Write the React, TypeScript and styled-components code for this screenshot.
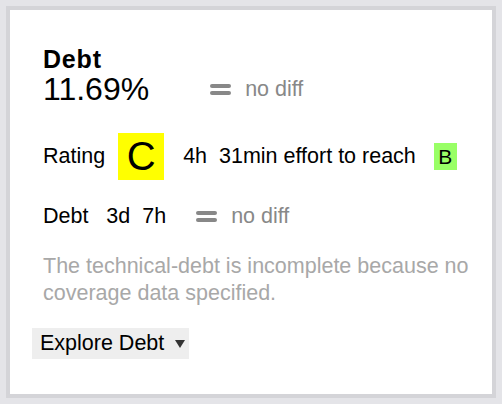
import React from "react";
import styled, { createGlobalStyle } from "styled-components";

const Global = createGlobalStyle`
  html, body { margin: 0; padding: 0; background: #e4e4e8; }
  body { font-family: "Liberation Sans", Arial, sans-serif; }
`;

const Frame = styled.div`
  width: 502px;
  height: 404px;
  box-sizing: border-box;
  padding: 6px;
  background: #e4e4e8;
`;

const Card = styled.div`
  box-sizing: border-box;
  height: 100%;
  border: 4px solid #d4d4d8;
  background: #ffffff;
  padding: 36px 20px 0 33px;
  display: flex;
  flex-direction: column;
`;

const Title = styled.div`
  font-size: 25px;
  font-weight: bold;
  letter-spacing: 0.8px;
  color: #000;
  line-height: 26px;
`;

const Row = styled.div<{ $mt?: number }>`
  display: flex;
  align-items: center;
  margin-top: ${(p) => p.$mt ?? 0}px;
  font-size: 21.5px;
  line-height: 25px;
  color: #000;
`;

const Big = styled.span`
  font-size: 32px;
  line-height: 34px;
`;

const EqIcon = styled.span<{ $ml: number }>`
  display: inline-flex;
  flex-direction: column;
  gap: 3px;
  margin-left: ${(p) => p.$ml}px;
  margin-right: 14px;
  &::before, &::after {
    content: "";
    display: block;
    width: 21px;
    height: 4px;
    border-radius: 2px;
    background: #888;
  }
`;

const Diff = styled.span`
  color: #888;
`;

const Badge = styled.span<{ $bg: string; $w: number; $h: number; $fs: number }>`
  display: inline-flex;
  align-items: center;
  justify-content: center;
  width: ${(p) => p.$w}px;
  height: ${(p) => p.$h}px;
  background: ${(p) => p.$bg};
  font-size: ${(p) => p.$fs}px;
  color: #000;
`;

const Gap = styled.span<{ $w: number }>`
  display: inline-block;
  width: ${(p) => p.$w}px;
`;

const Note = styled.p`
  margin: 24px 0 0;
  font-size: 21.5px;
  line-height: 27px;
  color: #a8a8a8;
`;

const ExploreButton = styled.button`
  align-self: flex-start;
  margin: 21px 0 0 -11px;
  height: 31px;
  padding: 0 4px 0 8px;
  border: none;
  background: #eeeeee;
  font-family: inherit;
  font-size: 21.5px;
  color: #000;
  display: inline-flex;
  align-items: center;
  gap: 11px;
  cursor: pointer;
`;

const Caret = styled.span`
  width: 0;
  height: 0;
  border-left: 5px solid transparent;
  border-right: 5px solid transparent;
  border-top: 8px solid #333;
`;

export default function App() {
  return (
    <>
      <Global />
      <Frame>
        <Card>
          <Title>Debt</Title>
          <Row>
            <Big>11.69%</Big>
            <EqIcon $ml={61} />
            <Diff>no diff</Diff>
          </Row>
          <Row $mt={27}>
            <span>Rating</span>
            <Gap $w={13} />
            <Badge $bg="#ffff00" $w={46} $h={47} $fs={40}>C</Badge>
            <Gap $w={19} />
            <span>4h&nbsp;&nbsp;31min effort to reach</span>
            <Gap $w={18} />
            <Badge $bg="#99ff66" $w={23} $h={27} $fs={21}>B</Badge>
          </Row>
          <Row $mt={24}>
            <span>Debt&nbsp;&nbsp;&nbsp;3d&nbsp;&nbsp;7h</span>
            <EqIcon $ml={30} />
            <Diff>no diff</Diff>
          </Row>
          <Note>
            The technical-debt is incomplete because no coverage data specified.
          </Note>
          <ExploreButton>
            Explore Debt
            <Caret />
          </ExploreButton>
        </Card>
      </Frame>
    </>
  );
}
